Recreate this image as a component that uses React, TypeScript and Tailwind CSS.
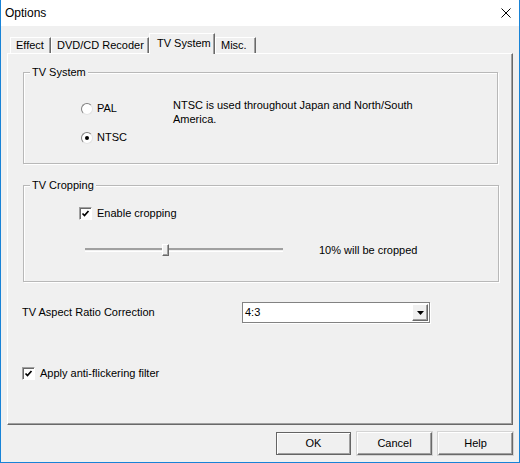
import type { ReactNode } from 'react'

function CheckBox({ checked }: { checked: boolean }) {
  return (
    <span className="w-[13px] h-[13px] flex-shrink-0 flex items-center justify-center bg-white border border-t-[#a0a0a0] border-l-[#a0a0a0] border-r-white border-b-white shadow-[inset_1px_1px_0_#696969]">
      {checked && (
        <svg width="9" height="9" viewBox="0 0 9 9">
          <path d="M1.5 4.5 L3.5 6.5 L7.5 2" stroke="#000" strokeWidth="1.7" fill="none" />
        </svg>
      )}
    </span>
  )
}

function Radio({ checked }: { checked: boolean }) {
  return (
    <span className="w-[12px] h-[12px] flex-shrink-0 rounded-full flex items-center justify-center bg-white border border-t-[#808080] border-l-[#808080] border-r-[#e3e3e3] border-b-[#e3e3e3]">
      {checked && <span className="w-[4px] h-[4px] rounded-full bg-black" />}
    </span>
  )
}

function Group({ title, className, children }: { title: string; className: string; children: ReactNode }) {
  return (
    <div className={`relative border border-[#b8b8b8] shadow-[inset_1px_1px_0_#fff,1px_1px_0_#fff] ${className}`}>
      {/* Caption sits on the top border */}
      <span className="absolute -top-[7px] left-[6px] px-[2px] bg-[#f0f0f0] leading-[13px]">{title}</span>
      {children}
    </div>
  )
}

function Tab({ label, active, width }: { label: string; active?: boolean; width: string }) {
  if (active) {
    return (
      <div className={`relative z-10 h-[21px] -mb-px ${width} bg-[#f0f0f0] border-t border-l border-white border-r border-r-[#696969] shadow-[inset_-1px_0_0_#a0a0a0] pl-[7px] pt-[3px] leading-[13px]`}>
        {label}
      </div>
    )
  }
  return (
    <div className={`h-[16px] ${width} bg-[#f0f0f0] border-t border-l border-white border-r border-r-[#696969] shadow-[inset_-1px_0_0_#a0a0a0] pl-[5px] pt-[1px] leading-[13px]`}>
      {label}
    </div>
  )
}

function Button({ label, isDefault }: { label: string; isDefault?: boolean }) {
  const frame = isDefault
    ? 'border border-[#646464] shadow-[inset_1px_1px_0_#fff,inset_-1px_-1px_0_#a0a0a0]'
    : 'border border-t-white border-l-white border-r-[#696969] border-b-[#696969] shadow-[inset_-1px_-1px_0_#a0a0a0,0_0_0_1px_#d4d4d4]'
  return (
    <button className={`w-[75px] h-[23px] bg-[#f0f0f0] ${frame} text-[11px] leading-[13px] text-black`}>
      {label}
    </button>
  )
}

export default function App() {
  return (
    <div className="w-[520px] h-[463px] flex flex-col border-l border-r border-b border-[#1883d7] font-['Liberation_Sans',Arial,sans-serif] text-[11px] text-black bg-[#f0f0f0] overflow-hidden">
      {/* Title bar */}
      <div className="h-[26px] bg-white flex items-center justify-between pl-[4px] pr-[8px] flex-shrink-0">
        <span className="text-[12px] leading-[14px]">Options</span>
        <svg width="10" height="10" viewBox="0 0 10 10">
          <path d="M0.5 0.5 L9.5 9.5 M9.5 0.5 L0.5 9.5" stroke="#000" strokeWidth="1" />
        </svg>
      </div>

      {/* Tabs */}
      <div className="flex items-end h-[20px] mt-[7px] ml-[9px] flex-shrink-0">
        <Tab label="Effect" width="w-[41px]" />
        <Tab label="DVD/CD Recoder" width="w-[98px]" />
        <Tab label="TV System" active width="w-[66px]" />
        <Tab label="Misc." width="w-[41px]" />
      </div>

      {/* Tab page */}
      <div className="ml-[6px] w-[506px] h-[372px] flex-shrink-0 flex flex-col border-t border-l border-white border-r border-b border-r-[#696969] border-b-[#696969] shadow-[inset_-1px_-1px_0_#a0a0a0]">
        <Group title="TV System" className="ml-[15px] mt-[18px] w-[475px] h-[92px] flex">
          <div className="w-[92px] ml-[57px] pt-[29px] flex flex-col gap-[16px]">
            <label className="flex items-center gap-[4px] h-[13px]">
              <Radio checked={false} />
              <span className="leading-[13px]">PAL</span>
            </label>
            <label className="flex items-center gap-[4px] h-[13px]">
              <Radio checked />
              <span className="leading-[13px]">NTSC</span>
            </label>
          </div>
          <p className="pt-[25px] leading-[14px]">
            NTSC is used throughout Japan and North/South
            <br />
            America.
          </p>
        </Group>

        <Group title="TV Cropping" className="ml-[15px] mt-[21px] w-[476px] h-[97px] flex flex-col">
          <label className="flex items-center gap-[5px] ml-[55px] mt-[21px] h-[13px]">
            <CheckBox checked />
            <span className="leading-[13px]">Enable cropping</span>
          </label>
          <div className="flex items-center ml-[61px] mt-[24px] h-[12px]">
            <span className="w-[77px] h-[4px] border-t-2 border-[#a0a0a0] border-b border-b-white" />
            <span className="w-[7px] h-[12px] bg-[#f0f0f0] border border-t-white border-l-white border-r-[#696969] border-b-[#696969] shadow-[inset_-1px_-1px_0_#a0a0a0]" />
            <span className="w-[114px] h-[4px] border-t-2 border-[#a0a0a0] border-b border-b-white" />
            <span className="ml-[36px] leading-[13px]">10% will be cropped</span>
          </div>
        </Group>

        <div className="flex items-center ml-[14px] mt-[20px] h-[21px]">
          <span className="w-[220px] leading-[13px]">TV Aspect Ratio Correction</span>
          <div className="w-[188px] h-[21px] flex items-center bg-white border border-[#828282] shadow-[1px_1px_0_#fff]">
            <span className="flex-1 pl-[2px] leading-[13px]">4:3</span>
            <span className="w-[16px] h-[17px] mr-px flex items-center justify-center bg-[#f0f0f0] border border-t-white border-l-white border-r-[#696969] border-b-[#696969] shadow-[inset_-1px_-1px_0_#a0a0a0]">
              <svg width="7" height="4" viewBox="0 0 7 4">
                <path d="M0 0 H7 L3.5 4 Z" fill="#000" />
              </svg>
            </span>
          </div>
        </div>

        <label className="flex items-center gap-[5px] ml-[14px] mt-[44px] h-[13px]">
          <CheckBox checked />
          <span className="leading-[13px]">Apply anti-flickering filter</span>
        </label>
      </div>

      {/* Dialog buttons */}
      <div className="flex justify-end gap-[6px] pr-[6px] mt-[7px] flex-shrink-0">
        <Button label="OK" isDefault />
        <Button label="Cancel" />
        <Button label="Help" />
      </div>
    </div>
  )
}
